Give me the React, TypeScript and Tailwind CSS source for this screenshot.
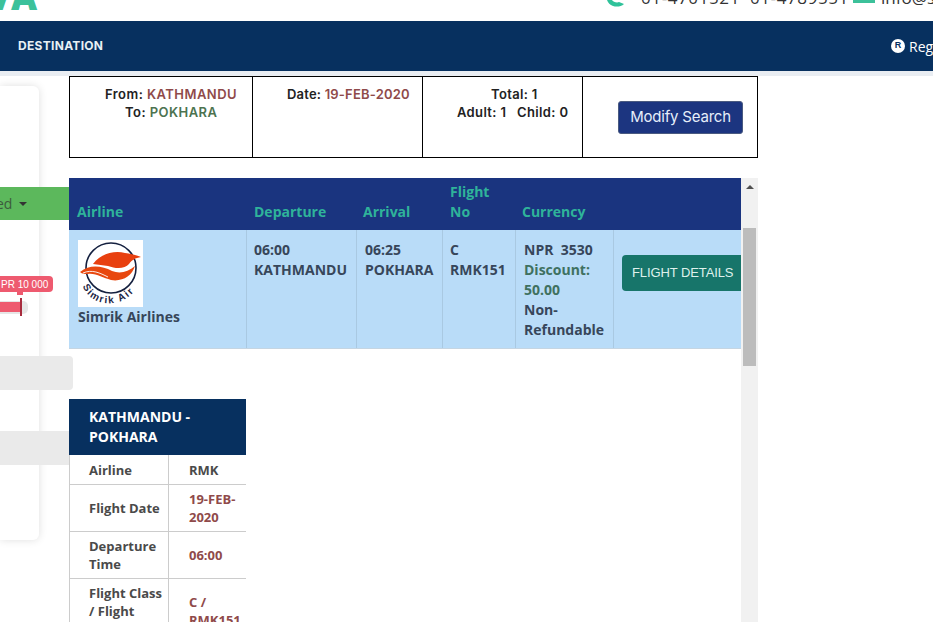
import React from "react";

const mont = "font-['Inter','Liberation_Sans',sans-serif]";

function SimrikLogo() {
  return (
    <svg width="65" height="67" viewBox="0 0 65 67" className="block bg-white">
      <defs>
        <path id="simrik-arc" d="M4 44 C12 70 50 70 62 42" fill="none" />
      </defs>
      <circle cx="33" cy="28" r="25" fill="none" stroke="#14203f" strokeWidth="1.6" />
      <path d="M15 24 C22 14 36 10 47 13 C53 14 58 15 63 17 C57 18 54 20 51 24 C47 29 38 29 30 26 C25 25 20 25 15 24 Z" fill="#e8400f" />
      <path d="M2 32 C12 24 24 26 34 31 C42 34 50 32 57 26 C54 36 44 42 33 40 C25 38 18 33 10 34 C7 34 4 34 2 32 Z" fill="#e8480f" />
      <path d="M5 33 C14 29 22 33 30 37" fill="none" stroke="#fff" strokeWidth="0.9" />
      <text fontSize="10" fontWeight="700" fill="#1a2444" letterSpacing="1.6" fontFamily="'Liberation Sans',sans-serif">
        <textPath href="#simrik-arc" startOffset="2">Simrik Air</textPath>
      </text>
    </svg>
  );
}

function DetailRow({ label, value, valueClass, h }: { label: React.ReactNode; value: React.ReactNode; valueClass: string; h: string }) {
  return (
    <div className={`flex border-b border-[#ccc] ${h}`}>
      <div className="w-[100px] shrink-0 border-r border-l border-[#ccc] pl-[19px] pr-1 flex items-center text-[#4a4a4a]">
        <span>{label}</span>
      </div>
      <div className={`flex-1 pl-5 flex items-center ${valueClass}`}>
        <span>{value}</span>
      </div>
    </div>
  );
}

export default function App() {
  return (
    <div className="w-[933px] h-[622px] overflow-hidden bg-white flex flex-col font-['Open_Sans',sans-serif]">
      {/* Top header */}
      <header className="h-[21px] shrink-0 bg-white overflow-hidden flex justify-between items-start">
        <div className="h-[21px] overflow-hidden w-[40px]">
          <div className="text-[36px] font-extrabold leading-[36px] text-[#3cc19a] -mt-[21px] -ml-[14px] whitespace-nowrap">
            VA
          </div>
        </div>
        <div className="w-[326px] flex items-start text-[#333] text-[17px] leading-[17px] whitespace-nowrap overflow-hidden h-[21px]">
          <svg width="18" height="7" viewBox="0 0 18 7" className="shrink-0">
            <path d="M0 0 H5 C6 2 10 3 12 2 L17 4 C14 7 9 7 6 6 C3 5 1 3 0 0 Z" fill="#2fc29a" />
          </svg>
          <div className="ml-[16px] -mt-[11px] w-[212px] shrink-0 tracking-[0.6px]">01-4701521&nbsp; 01-4789551</div>
          <div className="w-[22px] h-[3px] shrink-0 bg-[#3cc19a]" />
          <div className="ml-[6px] -mt-[11px]">info@simrik.com</div>
        </div>
      </header>

      {/* Nav */}
      <nav className="h-[50px] shrink-0 bg-[#07305f] flex items-center justify-between text-white">
        <span className={`ml-[18px] text-[12px] font-bold ${mont} tracking-[0.3px] text-[#e8f0f4]`}>DESTINATION</span>
        <span className="flex items-center text-[14px] whitespace-nowrap w-[42px] overflow-hidden">
          <span className="w-[14px] h-[14px] rounded-full bg-white text-[#07305f] text-[9px] font-bold flex items-center justify-center shrink-0 font-['Liberation_Sans',sans-serif]">R</span>
          <span className="ml-[4px]">Register</span>
        </span>
      </nav>
      <div className="h-[5px] shrink-0 bg-[#e9edf2]" />

      {/* Body */}
      <div className="flex-1 flex min-h-0">
        {/* Sidebar */}
        <aside className="w-[69px] shrink-0 relative pt-[10px]">
          <div className="w-[39px] h-[454px] bg-white rounded-br-[6px] rounded-tr-[6px] shadow-[0_0_8px_rgba(0,0,0,0.13)]" />
          <div className="absolute left-0 top-[111px] w-[69px] h-[33px] bg-[#5cb85c] text-[#3d5b3d] text-[14px] flex items-center z-10">
            <span className="-ml-[4px]">ed</span>
            <span className="ml-[7px] w-0 h-0 border-x-[4px] border-x-transparent border-t-[4px] border-t-[#333]" />
          </div>
          <div className="absolute left-0 top-[200px] w-[53px] h-[16px] bg-[#ee5a6f] rounded-r-[4px] text-white text-[10px] flex items-center pl-[1px] font-['Liberation_Sans',sans-serif] whitespace-nowrap overflow-hidden z-10">
            PR 10 000
          </div>
          <div className="absolute left-[17px] top-[216px] w-[6px] h-[3px] bg-[#ee5a6f] z-10" />
          <div className="absolute left-0 top-[225px] w-[28px] h-[13px] bg-[#e6e6e6] rounded-r-[5px] z-0" />
          <div className="absolute left-0 top-[226px] w-[20px] h-[10px] bg-[#ee5a6f] z-10" />
          <div className="absolute left-[20px] top-[222px] w-[2px] h-[18px] bg-[#a82c3e] z-10" />
          <div className="absolute left-0 top-[280px] w-[73px] h-[34px] bg-[#eaeaea] rounded-r-[4px] z-10" />
          <div className="absolute left-0 top-[355px] w-[69px] h-[34px] bg-[#eaeaea] z-10" />
        </aside>

        {/* Main */}
        <main className="flex-1 min-w-0 flex flex-col">
          {/* Summary */}
          <div className={`w-[689px] h-[82px] shrink-0 border border-black flex ${mont} text-[13px] font-semibold leading-[18px] text-[#222] tracking-[0.45px]`}>
            <div className="w-[183px] shrink-0 border-r border-black pt-[8px] pl-[35px]">
              <div className="whitespace-nowrap">From: <span className="text-[#8f4a4a]">KATHMANDU</span></div>
              <div className="pl-[20px] whitespace-nowrap">To: <span className="text-[#4c7350]">POKHARA</span></div>
            </div>
            <div className="w-[170px] shrink-0 border-r border-black pt-[8px] pl-[34px] whitespace-nowrap tracking-[0.2px]">
              Date: <span className="text-[#8f4a4a]">19-FEB-2020</span>
            </div>
            <div className="w-[160px] shrink-0 border-r border-black pt-[8px] pl-[34px] tracking-[0.35px]">
              <div className="pl-[34px]">Total: 1</div>
              <div className="whitespace-nowrap">Adult: 1 &nbsp; Child: 0</div>
            </div>
            <div className="flex-1 flex items-center pl-[35px]">
              <button className="w-[125px] h-[33px] bg-[#1c3580] rounded-[3px] border border-[#4a5a80] text-[#e6eefa] text-[15px] font-normal tracking-[-0.2px] whitespace-nowrap">
                Modify Search
              </button>
            </div>
          </div>

          {/* Scroll area */}
          <div className="mt-[20px] w-[689px] flex-1 min-h-0 flex overflow-hidden">
            <div className="w-[672px] shrink-0">
              {/* Results table */}
              <div className="h-[52px] bg-[#1a347f] flex items-end pb-[8px] text-[14px] font-bold leading-[20px] text-[#2fb39a]">
                <div className="w-[178px] pl-[8px] shrink-0">Airline</div>
                <div className="w-[110px] pl-[7px] shrink-0">Departure</div>
                <div className="w-[87px] pl-[6px] shrink-0">Arrival</div>
                <div className="w-[72px] pl-[6px] shrink-0">Flight<br />No</div>
                <div className="pl-[6px]">Currency</div>
              </div>
              <div className="h-[119px] bg-[#b9dcf8] border-b border-[#c5d5e2] flex text-[14px] font-bold leading-[20px] text-[#37465a]">
                <div className="w-[178px] shrink-0 border-r border-[#a9c9e2] pl-[9px] pt-[10px]">
                  <SimrikLogo />
                  <div>Simrik Airlines</div>
                </div>
                <div className="w-[110px] shrink-0 border-r border-[#a9c9e2] pl-[7px] pt-[10px]">06:00<br />KATHMANDU</div>
                <div className="w-[86px] shrink-0 border-r border-[#a9c9e2] pl-[8px] pt-[10px]">06:25<br />POKHARA</div>
                <div className="w-[73px] shrink-0 border-r border-[#a9c9e2] pl-[7px] pt-[10px]">C<br />RMK151</div>
                <div className="w-[98px] shrink-0 border-r border-[#a9c9e2] pl-[8px] pt-[10px]">
                  NPR&nbsp; 3530<br />
                  <span className="text-[#3f7160]">Discount:<br />50.00</span><br />
                  Non-<br />Refundable
                </div>
                <div className="flex-1 pl-[8px] pt-[25px] overflow-hidden">
                  <button className="w-[125px] h-[36px] bg-[#17756a] rounded-l-[4px] text-[#dff1ec] text-[13px] font-normal tracking-[-0.1px] font-['Liberation_Sans',sans-serif] text-left pl-[10px] whitespace-nowrap">
                    FLIGHT DETAILS
                  </button>
                </div>
              </div>

              {/* Details */}
              <div className="mt-[50px] w-[177px] text-[13px] font-bold leading-[18px]">
                <div className="h-[56px] bg-[#07305f] text-white text-[14px] leading-[20px] pl-[20px] pt-[8px]">
                  KATHMANDU -<br />POKHARA
                </div>
                <DetailRow h="h-[30px]" label="Airline" value="RMK" valueClass="text-[#4a4a4a]" />
                <DetailRow h="h-[47px]" label="Flight Date" value={<>19-FEB-<br />2020</>} valueClass="text-[#8f4a4a]" />
                <DetailRow h="h-[47px]" label={<>Departure<br />Time</>} value="06:00" valueClass="text-[#8f4a4a]" />
                <DetailRow h="h-[65px]" label={<>Flight Class<br />/ Flight<br />Number</>} value={<>C /<br />RMK151</>} valueClass="text-[#8f4a4a]" />
              </div>
            </div>

            {/* Scrollbar */}
            <div className="w-[17px] shrink-0 bg-[#f1f1f1] flex flex-col items-center">
              <div className="h-[17px] w-full flex items-center justify-center shrink-0">
                <span className="w-0 h-0 border-x-[4px] border-x-transparent border-b-[4px] border-b-[#505050]" />
              </div>
              <div className="mt-[33px] w-[13px] h-[138px] bg-[#bcbcbc]" />
            </div>
          </div>
        </main>
      </div>
    </div>
  );
}
